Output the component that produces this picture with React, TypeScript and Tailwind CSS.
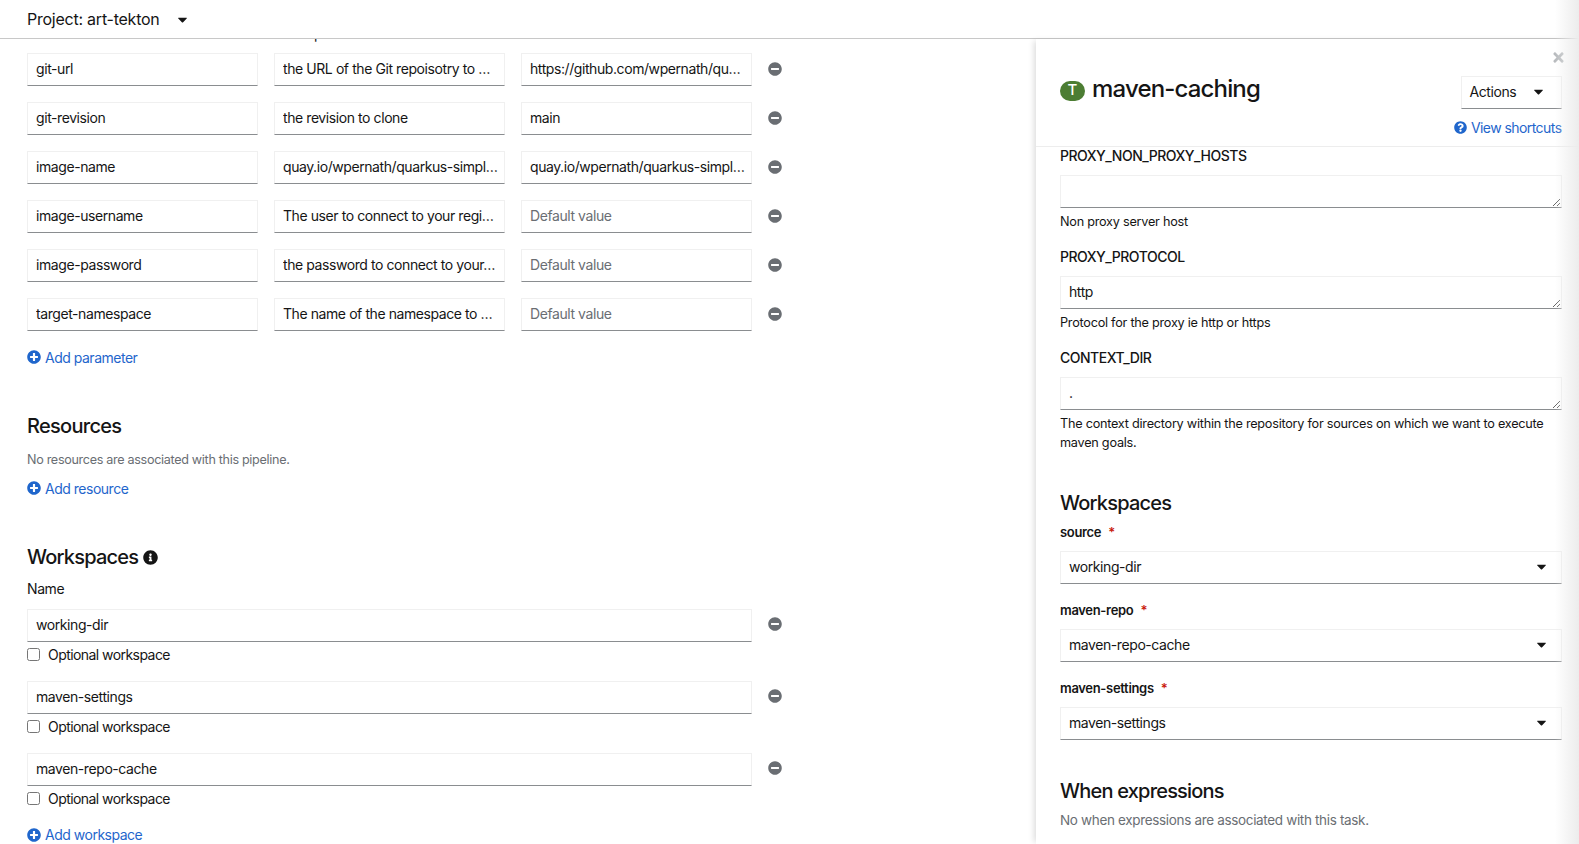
import { FaCaretDown, FaInfoCircle, FaMinusCircle, FaPlusCircle, FaQuestionCircle, FaTimes } from "react-icons/fa";

const params = [
  ["git-url", "the URL of the Git repoisotry to …", "https://github.com/wpernath/qu…"],
  ["git-revision", "the revision to clone", "main"],
  ["image-name", "quay.io/wpernath/quarkus-simpl…", "quay.io/wpernath/quarkus-simpl…"],
  ["image-username", "The user to connect to your regi…", ""],
  ["image-password", "the password to connect to your…", ""],
  ["target-namespace", "The name of the namespace to …", ""],
];

const workspaces = ["working-dir", "maven-settings", "maven-repo-cache"];

const selects = [
  ["source", "working-dir"],
  ["maven-repo", "maven-repo-cache"],
  ["maven-settings", "maven-settings"],
];

const inputClass =
  "h-[33px] border border-[#f0f0f0] border-b-[#8a8d90] bg-white pr-[6px] pb-[2px] pl-[8px] text-[14px] tracking-[-0.03em] text-[#151515] placeholder:text-[#6a6e73] outline-none";

function RemoveButton() {
  return (
    <button className="mb-[2px] ml-[-0.5px] flex-none text-[#6a6e73]">
      <FaMinusCircle size={14} />
    </button>
  );
}

function AddLink({ label }: { label: string }) {
  return (
    <button className="flex h-[20px] items-center gap-[4px] text-[14px] tracking-[-0.035em] text-[#1f66cc]">
      <FaPlusCircle size={14} />
      {label}
    </button>
  );
}

function Field({ label, value, help }: { label: string; value: string; help: string }) {
  return (
    <div className="mb-[17px]">
      <div className="mt-[-1px] mb-[9px] h-[20px] text-[14px] leading-[20px] font-medium tracking-[-0.035em] text-[#151515]">{label}</div>
      <textarea
        readOnly
        rows={1}
        value={value}
        className="block h-[33px] w-full resize-y overflow-hidden border border-[#f0f0f0] border-b-[#8a8d90] bg-white px-[8px] pt-[5px] text-[14px] leading-[20px] tracking-[-0.03em] text-[#151515] outline-none"
      />
      <div className="mt-[4px] text-[12.7px] leading-[19px] tracking-[-0.02em] text-[#151515]">{help}</div>
    </div>
  );
}

export default function App() {
  return (
    <div className="relative flex h-screen flex-col overflow-hidden bg-white font-[Inter,sans-serif] text-[#151515]">
      <header className="flex h-[39px] flex-none items-center border-b border-[#c8c8c8] pl-[27px]">
        <span className="text-[16px] tracking-[-0.015em]">Project: art-tekton</span>
        <FaCaretDown size={15} className="ml-[15px]" />
      </header>

      <div className="flex min-h-0 flex-1">
        {/* pipeline form */}
        <main className="min-w-0 flex-1 overflow-hidden pl-[27px]">
          <div className="mt-[-15px] mb-[9px] flex h-[20px] gap-[16.5px] text-[14px] leading-[20px] tracking-[-0.03em]">
            <span className="w-[230.5px]">Name</span>
            <span className="w-[230.5px]">Description</span>
            <span className="w-[230.5px]">Default value</span>
          </div>

          <div className="flex flex-col gap-[16px]">
            {params.map(([name, description, value]) => (
              <div key={name} className="flex items-center gap-[16.5px]">
                <input readOnly value={name} className={`${inputClass} w-[230.5px]`} />
                <input readOnly value={description} className={`${inputClass} w-[230.5px]`} />
                <input readOnly value={value} placeholder="Default value" className={`${inputClass} w-[230.5px]`} />
                <RemoveButton />
              </div>
            ))}
          </div>

          <div className="mt-[16px]">
            <AddLink label="Add parameter" />
          </div>

          <h2 className="mt-[45px] text-[20px] leading-[28px] font-medium tracking-[-0.035em]">Resources</h2>
          <p className="mt-[10px] text-[12.6px] leading-[20px] tracking-[-0.025em] text-[#6a6e73]">No resources are associated with this pipeline.</p>
          <div className="mt-[8px]">
            <AddLink label="Add resource" />
          </div>

          <h2 className="mt-[45px] flex items-center gap-[5px] text-[20px] leading-[28px] font-medium tracking-[-0.04em]">
            Workspaces
            <FaInfoCircle size={15} />
          </h2>
          <div className="mt-[8px] text-[14px] leading-[20px] tracking-[-0.03em]">Name</div>

          <div className="mt-[9.5px]">
            {workspaces.map((name) => (
              <div key={name} className="mb-[16px]">
                <div className="flex items-center gap-[16.5px]">
                  <input readOnly value={name} className={`${inputClass} w-[724.5px]`} />
                  <RemoveButton />
                </div>
                <label className="mt-[3px] flex h-[20px] items-center gap-[8px] text-[14px] tracking-[-0.04em]">
                  <input type="checkbox" className="m-0 h-[13px] w-[13px]" />
                  Optional workspace
                </label>
              </div>
            ))}
          </div>
          <AddLink label="Add workspace" />
        </main>

        {/* task side panel */}
        <aside className="relative w-[543px] flex-none overflow-hidden pr-[17.5px] pl-[24px] shadow-[-4px_0_6px_-2px_rgba(0,0,0,0.14)]">
          <button className="absolute top-[11px] right-[13px] text-[#b8bbbe]">
            <FaTimes size={15} />
          </button>

          <div className="mr-[-17.5px] ml-[-24px] h-[107.5px] border-b border-[#ededed] pt-[37px] pr-[17.5px] pl-[24px]">
            <div className="flex items-start justify-between">
              <div className="mt-[-5px] flex items-center gap-[7px]">
                <span className="mt-[3px] flex h-[20px] w-[25px] items-center justify-center rounded-full bg-[#4c7d33] text-[15px] font-medium text-white">T</span>
                <h1 className="text-[24px] leading-[36px] font-medium tracking-[-0.035em]">maven-caching</h1>
              </div>
              <button className="flex h-[33px] w-[101px] items-center justify-between border border-[#f0f0f0] border-b-[#8a8d90] pr-[15px] pb-[2px] pl-[8px] text-[14px] tracking-[-0.03em]">
                Actions
                <FaCaretDown size={15} />
              </button>
            </div>
            <div className="mt-[8px] flex h-[20px] items-center justify-end gap-[4px] text-[14px] tracking-[-0.04em] text-[#1f66cc]">
              <FaQuestionCircle size={13} />
              View shortcuts
            </div>
          </div>

          <Field label="PROXY_NON_PROXY_HOSTS" value="" help="Non proxy server host" />
          <Field label="PROXY_PROTOCOL" value="http" help="Protocol for the proxy ie http or https" />
          <Field
            label="CONTEXT_DIR"
            value="."
            help="The context directory within the repository for sources on which we want to execute maven goals."
          />

          <h2 className="mt-[37px] text-[20px] leading-[28px] font-medium tracking-[-0.04em]">Workspaces</h2>
          <div className="mt-[5px]">
            {selects.map(([label, value]) => (
              <div key={label} className="mb-[16px]">
                <div className="mb-[9px] h-[20px] text-[13px] leading-[20px] font-semibold tracking-[-0.025em]">
                  {label}
                  <span className="ml-[7px] text-[#c9190b]">*</span>
                </div>
                <button className="flex h-[33px] w-full items-center justify-between border border-[#f0f0f0] border-b-[#8a8d90] bg-white pr-[12px] pb-[2px] pl-[8px] text-[14px] tracking-[-0.03em]">
                  {value}
                  <FaCaretDown size={15} />
                </button>
              </div>
            ))}
          </div>

          <h2 className="mt-[37px] text-[20px] leading-[28px] font-medium tracking-[-0.04em]">When expressions</h2>
          <p className="mt-[5px] text-[13.5px] leading-[20px] tracking-[-0.025em] text-[#6a6e73]">No when expressions are associated with this task.</p>
        </aside>
      </div>

      <div className="pointer-events-none absolute top-0 right-0 bottom-0 w-[24px] bg-gradient-to-r from-transparent to-[#ececec]" />
    </div>
  );
}
